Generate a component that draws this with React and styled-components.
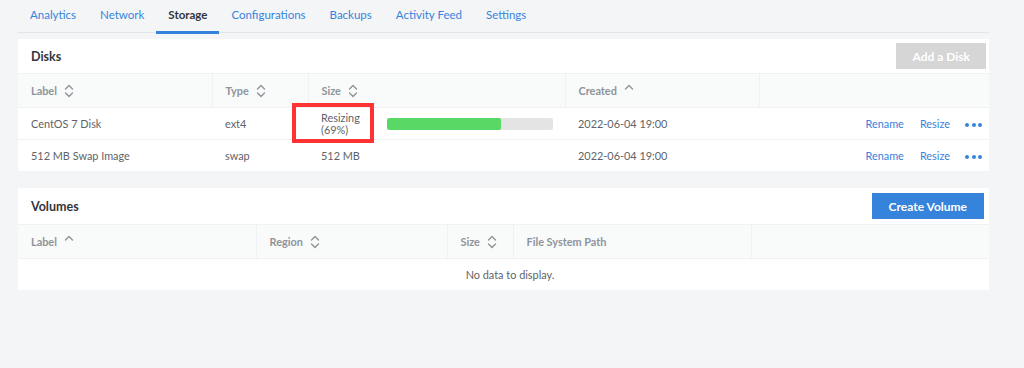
import styled, { createGlobalStyle } from 'styled-components'

const Global = createGlobalStyle`
    body {
        margin: 0;
        background: #f4f5f7;
        font-family: Lato, "Open Sans", sans-serif;
    }
`

const Page = styled.div`
    width: 971px;
    padding: 0 35px 0 18px;
    height: 368px;
`

const Tabs = styled.nav`
    display: flex;
    height: 32px;
    border-bottom: 1px solid #e3e5e8;
`

const Tab = styled.div`
    padding: 0 12px;
    font-size: 11.5px;
    line-height: 30px;
    color: ${p => (p.$active ? '#32363c' : '#3683dc')};
    font-weight: ${p => (p.$active ? 700 : 400)};
    border-bottom: 3px solid ${p => (p.$active ? '#3683dc' : 'transparent')};
    margin-bottom: -2px;
`

const Panel = styled.section`
    background: #fff;
    margin-top: ${p => p.$top}px;
`

const PanelHead = styled.div`
    display: flex;
    align-items: center;
    justify-content: space-between;
    height: ${p => p.$h}px;
    padding: 0 ${p => p.$pr}px 0 13px;
`

const PanelTitle = styled.h2`
    margin: 0;
    font-size: 12.5px;
    font-weight: 700;
    color: #32363c;
`

const Button = styled.button`
    border: none;
    height: 26px;
    padding: 0 ${p => p.$px}px;
    font-family: inherit;
    font-size: 12px;
    font-weight: 700;
    color: #fff;
    background: ${p => (p.$disabled ? '#d6d6d6' : '#3683dc')};
`

const Table = styled.table`
    width: 100%;
    border-collapse: collapse;
    table-layout: fixed;
    font-size: 10.9px;
`

const Th = styled.th`
    height: 33px;
    padding: 0 0 0 13px;
    text-align: left;
    background: #f9fafa;
    color: #8f949a;
    font-weight: 700;
    border-top: 1px solid #eff1f2;
    border-bottom: 1px solid #eff1f2;
    border-left: ${p => (p.$first ? 'none' : '1px solid #eff1f2')};
`

const Td = styled.td`
    height: 31px;
    padding: 0 ${p => (p.$right ? '7px' : '0')} 0 13px;
    color: #606469;
    border-bottom: ${p => (p.$last ? 'none' : '1px solid #f0f1f2')};
    text-align: ${p => (p.$right ? 'right' : p.$center ? 'center' : 'left')};
`

const HeadLabel = styled.span`
    display: inline-flex;
    align-items: center;
    gap: 7px;
`

const SizeCell = styled.div`
    display: flex;
    align-items: center;
    gap: 27px;
`

const Status = styled.div`
    line-height: 12px;
    position: relative;
`

const Highlight = styled.div`
    position: absolute;
    left: -29px;
    top: -9px;
    width: 74px;
    height: 32px;
    border: 4px solid #ff3333;
`

const Track = styled.div`
    width: 166px;
    height: 12px;
    border-radius: 2px;
    background: #e4e4e4;
    overflow: hidden;
`

const Fill = styled.div`
    height: 100%;
    background: #5ad865;
    border-radius: 2px;
`

const Link = styled.a`
    color: #3683dc;
    margin-left: 16px;
    text-decoration: none;
`

const Dots = styled.span`
    display: inline-flex;
    gap: 2.5px;
    margin-left: 15px;
    vertical-align: middle;
    span {
        width: 4px;
        height: 4px;
        border-radius: 50%;
        background: #3683dc;
    }
`

function Sort({ dir }) {
    return (
        <svg width="10" height="14" viewBox="0 0 10 14" fill="none" stroke="#8f949a" strokeWidth="1.4" strokeLinecap="round" strokeLinejoin="round">
            {dir !== 'down' && <path d="M1.5 5 L5 1.5 L8.5 5" />}
            {dir === 'both' && <path d="M1.5 9 L5 12.5 L8.5 9" />}
        </svg>
    )
}

function Head({ children, sort, first }) {
    return (
        <Th $first={first}>
            <HeadLabel>
                {children}
                {sort && <Sort dir={sort} />}
            </HeadLabel>
        </Th>
    )
}

const disks = [
    { label: 'CentOS 7 Disk', type: 'ext4', resizing: 69 },
    { label: '512 MB Swap Image', type: 'swap', size: '512 MB' },
]

function App() {
    const tabs = ['Analytics', 'Network', 'Storage', 'Configurations', 'Backups', 'Activity Feed', 'Settings']
    return (
        <Page>
            <Global />
            <Tabs>
                {tabs.map(t => (
                    <Tab key={t} $active={t === 'Storage'}>{t}</Tab>
                ))}
            </Tabs>

            <Panel $top={6}>
                <PanelHead $h={34} $pr={3}>
                    <PanelTitle>Disks</PanelTitle>
                    <Button $disabled $px={16}>Add a Disk</Button>
                </PanelHead>
                <Table>
                    <colgroup>
                        <col style={{ width: 194 }} />
                        <col style={{ width: 96 }} />
                        <col style={{ width: 257 }} />
                        <col style={{ width: 194 }} />
                        <col />
                    </colgroup>
                    <thead>
                        <tr>
                            <Head first sort="both">Label</Head>
                            <Head sort="both">Type</Head>
                            <Head sort="both">Size</Head>
                            <Head sort="up">Created</Head>
                            <Head />
                        </tr>
                    </thead>
                    <tbody>
                        {disks.map((d, i) => {
                            const last = i === disks.length - 1
                            return (
                                <tr key={d.label}>
                                    <Td $last={last}>{d.label}</Td>
                                    <Td $last={last}>{d.type}</Td>
                                    <Td $last={last}>
                                        {d.resizing ? (
                                            <SizeCell>
                                                <Status>
                                                    <Highlight />
                                                    Resizing<br />({d.resizing}%)
                                                </Status>
                                                <Track>
                                                    <Fill style={{ width: `${d.resizing}%` }} />
                                                </Track>
                                            </SizeCell>
                                        ) : d.size}
                                    </Td>
                                    <Td $last={last}>2022-06-04 19:00</Td>
                                    <Td $last={last} $right>
                                        <Link>Rename</Link>
                                        <Link>Resize</Link>
                                        <Dots><span /><span /><span /></Dots>
                                    </Td>
                                </tr>
                            )
                        })}
                    </tbody>
                </Table>
            </Panel>

            <Panel $top={17}>
                <PanelHead $h={36} $pr={5}>
                    <PanelTitle>Volumes</PanelTitle>
                    <Button $px={17}>Create Volume</Button>
                </PanelHead>
                <Table>
                    <colgroup>
                        <col style={{ width: 238 }} />
                        <col style={{ width: 191 }} />
                        <col style={{ width: 66 }} />
                        <col style={{ width: 238 }} />
                        <col />
                    </colgroup>
                    <thead>
                        <tr>
                            <Head first sort="up">Label</Head>
                            <Head sort="both">Region</Head>
                            <Head sort="both">Size</Head>
                            <Head>File System Path</Head>
                            <Head />
                        </tr>
                    </thead>
                    <tbody>
                        <tr>
                            <Td $center $last colSpan={5}>No data to display.</Td>
                        </tr>
                    </tbody>
                </Table>
            </Panel>
        </Page>
    )
}

export default App
